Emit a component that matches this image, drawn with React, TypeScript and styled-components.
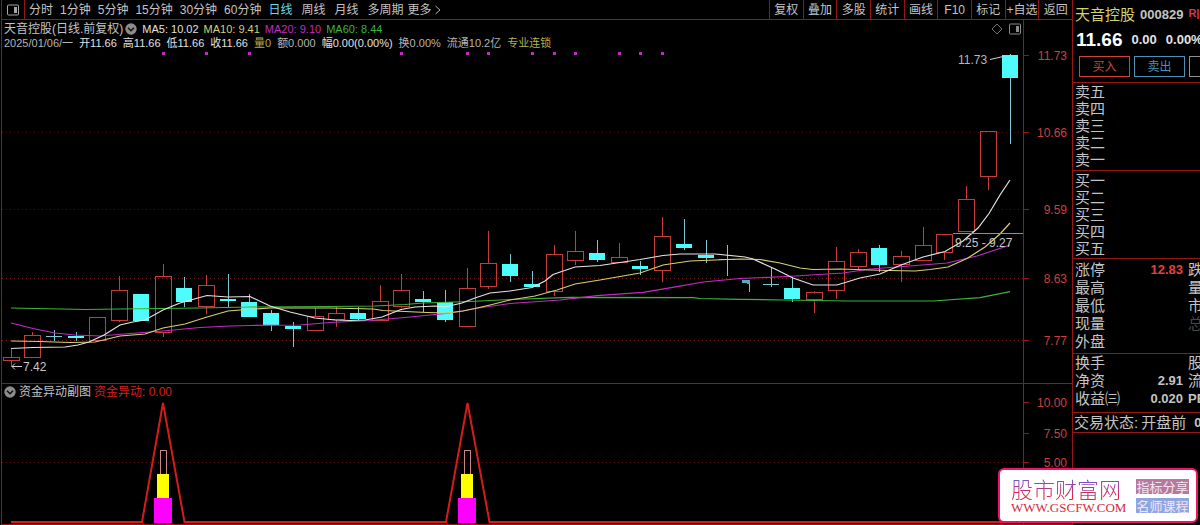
import React from "react";
import styled, { createGlobalStyle } from "styled-components";

const LINE = "#941616";
const CYAN = "#4ffcfc";
const RED = "#c43c3c";
const MAGENTA = "#c02cc0";
const YELLOW = "#d6d070";
const GREEN = "#3cb43c";
const SANS = '"Liberation Sans", "Noto Sans CJK SC", sans-serif';

const GlobalStyle = createGlobalStyle`
  *, *::before, *::after { box-sizing: border-box; }
  body { margin: 0; background: #000; color: #c4c4c4; font: 12px/14px ${SANS}; }
  button { font: inherit; color: inherit; background: none; border: 0; padding: 0; margin: 0; white-space: nowrap; cursor: pointer; }
  svg { display: block; }
`;

const Page = styled.div`
  position: relative;
  display: flex;
  min-height: 100vh;
  overflow: hidden;
`;

const Main = styled.main`
  flex: 1;
  min-width: 0;
  display: flex;
  flex-direction: column;
  padding-left: 1px;
`;

const Toolbar = styled.nav`
  display: flex;
  justify-content: space-between;
  height: 20px;
  border-left: 1px solid ${LINE};
  border-bottom: 1px solid ${LINE};
`;

const Periods = styled.div`
  display: flex;
  align-items: center;
`;

const LayoutButton = styled.button`
  display: grid;
  place-items: center;
  width: 23px;
  height: 19px;
  border-right: 1px solid ${LINE};
`;

const PeriodGroup = styled.div<{ $gap: number; $start: number }>`
  display: flex;
  align-items: center;
  gap: ${(p) => p.$gap}px;
  margin-left: ${(p) => p.$start}px;
`;

const PeriodButton = styled.button<{ $active?: boolean }>`
  display: flex;
  align-items: center;
  gap: 3px;
  color: ${(p) => (p.$active ? "#6cd8e8" : "inherit")};
`;

const Tools = styled.div`
  display: grid;
  grid-template-columns: repeat(9, 1fr);
  width: 303px;
  flex: none;
`;

const ToolButton = styled.button`
  border-left: 1px solid ${LINE};
  text-align: center;
`;

const Pane = styled.section<{ $lined?: boolean }>`
  display: flex;
  border-left: 1px solid ${LINE};
  border-top: ${(p) => (p.$lined ? `1px solid ${LINE}` : "0")};
  border-bottom: ${(p) => (p.$lined ? `1px solid ${LINE}` : "0")};
`;

const Plot = styled.div`
  flex: 1;
  min-width: 0;
`;

const Axis = styled.div`
  flex: none;
  width: 49px;
  border-left: 1px solid ${LINE};
`;

const InfoBar = styled.header`
  display: flex;
  justify-content: space-between;
  height: 30px;
  padding: 2px 2px 0 2px;
`;

const InfoRow = styled.div<{ $gap: number }>`
  display: flex;
  align-items: center;
  gap: ${(p) => p.$gap}px;
  height: 14px;
  white-space: nowrap;
`;

const Title = styled.h1`
  display: flex;
  align-items: center;
  gap: 2px;
  margin: 0;
  font-size: 12px;
  font-weight: 400;
`;

const Figure = styled.span<{ $color?: string }>`
  font-size: 11px;
  color: ${(p) => p.$color ?? "#e0e0e0"};
`;

const CornerTools = styled.div`
  display: flex;
  align-items: center;
  gap: 6px;
  height: 14px;
`;

const SubHeader = styled.header`
  display: flex;
  align-items: center;
  gap: 3px;
  height: 16px;
  padding-left: 2px;
  white-space: nowrap;
`;

const Alert = styled.span`
  color: #d02020;
`;

const Quote = styled.aside`
  flex: none;
  width: 128px;
  overflow: hidden;
  white-space: nowrap;
  border-left: 1px solid ${LINE};
`;

const QuoteHead = styled.div`
  height: 82px;
  padding: 2px 0 0 2px;
`;

const NameRow = styled.div`
  display: flex;
  align-items: center;
  gap: 5px;
  height: 25px;
`;

const StockName = styled.h2`
  margin: 0;
  font-size: 15px;
  font-weight: 400;
  color: ${YELLOW};
`;

const Code = styled.span`
  font-size: 13px;
  font-weight: 700;
`;

const Margin = styled.span`
  align-self: flex-start;
  margin-top: 4px;
  font-size: 11px;
  font-weight: 700;
  color: #d83848;
`;

const PriceRow = styled.div`
  display: flex;
  align-items: center;
  gap: 9px;
  height: 26px;
  margin-bottom: 1px;
  padding-left: 1px;
  font-size: 13px;
  font-weight: 700;
  color: #e4e4e4;
`;

const Price = styled.strong`
  font-size: 19px;
  color: #fff;
`;

const TradeRow = styled.div`
  display: flex;
  gap: 4px;
  padding: 2px 0 0 4px;
`;

const TradeButton = styled.button<{ $color: string }>`
  flex: none;
  width: 51px;
  height: 21px;
  border: 1px solid currentColor;
  color: ${(p) => p.$color};
`;

const Block = styled.div<{ $row: number; $top: number; $bottom: number }>`
  border-top: 1px solid ${LINE};
  padding: ${(p) => p.$top}px 0 ${(p) => p.$bottom}px 2px;
  font-size: 15px;
  line-height: ${(p) => p.$row}px;
`;

const Level = styled.div``;

const Fact = styled.div`
  display: grid;
  grid-template-columns: auto 1fr 17px;
  align-items: center;
`;

const Value = styled.span<{ $up?: boolean }>`
  font-size: 13px;
  font-weight: 700;
  text-align: right;
  color: ${(p) => (p.$up ? "#e04040" : "inherit")};
`;

const Next = styled.span<{ $dim?: boolean; $latin?: boolean }>`
  padding-left: 5px;
  color: ${(p) => (p.$dim ? "#484848" : "inherit")};
  font-size: ${(p) => (p.$latin ? 13 : 15)}px;
  font-weight: ${(p) => (p.$latin ? 700 : 400)};
`;

const Status = styled.div`
  display: flex;
  align-items: center;
  gap: 3px;
  height: 21px;
  padding-left: 1px;
  border-top: 1px solid ${LINE};
  border-bottom: 1px solid ${LINE};
  font-size: 15px;
`;

const Badge = styled.a`
  position: absolute;
  right: 2px;
  bottom: 2px;
  display: flex;
  justify-content: space-between;
  align-items: center;
  width: 200px;
  height: 55px;
  padding: 0 7px 0 11px;
  border: 2px solid #ee1466;
  border-radius: 6px;
  background: #fff;
  text-decoration: none;
  white-space: nowrap;
`;

const Brand = styled.span`
  display: block;
  font: 300 22px/24px "Noto Sans CJK SC", sans-serif;
  background: linear-gradient(#7c50cc 20%, #d82850 80%);
  background-clip: text;
  -webkit-background-clip: text;
  color: transparent;
`;

const Site = styled.span`
  display: block;
  font: 13px/15px "Liberation Serif", serif;
  color: #d42c40;
`;

const Tags = styled.span`
  display: grid;
  gap: 4px;
`;

const Tag = styled.span<{ $bg: string }>`
  width: 53px;
  font: 13px/15px "Noto Sans CJK SC", sans-serif;
  text-align: center;
  color: #f4e4f4;
  background: ${(p) => p.$bg};
`;

const PanelIcon = ({ color = "#a8a8a8" }: { color?: string }) => (
  <svg width="12" height="12" viewBox="0 0 12 12" aria-hidden="true">
    <rect x="0.5" y="1" width="11" height="10" rx="1" fill="none" stroke={color} />
    <rect x="7" y="3" width="3" height="6" fill={color} />
  </svg>
);

const DropIcon = () => (
  <svg width="12" height="12" viewBox="0 0 12 12" aria-hidden="true">
    <circle cx="6" cy="6" r="5.7" fill="#8c8c8c" />
    <path d="M3 4.7 6 7.7 9 4.7" fill="none" stroke="#101010" strokeWidth="1.5" />
  </svg>
);

// [open/close top, open/close bottom, high, low, rising]
type Candle = [number, number, number, number, boolean];

const candles: (Candle | null)[] = [
  [358, 360, 348, 367, true],
  [336, 357, 332, 357, true],
  [336, 337, 330, 341, false],
  [336, 338, 332, 341, false],
  [318, 340, 317, 342, true],
  [291, 320, 276, 322, true],
  [294, 321, 294, 321, false],
  [277, 332, 264, 337, true],
  [288, 302, 277, 307, false],
  [286, 306, 275, 314, true],
  [299, 301, 274, 307, false],
  [302, 317, 294, 317, false],
  [313, 325, 310, 331, false],
  [326, 329, 322, 347, false],
  [317, 330, 308, 331, true],
  [314, 319, 307, 327, true],
  [313, 319, 307, 320, false],
  [302, 320, 285, 320, true],
  [291, 306, 274, 308, true],
  [299, 302, 291, 312, false],
  [302, 320, 290, 322, false],
  [289, 326, 268, 326, true],
  [264, 286, 231, 289, true],
  [264, 276, 254, 282, false],
  [284, 287, 271, 287, false],
  [255, 291, 245, 296, true],
  [252, 260, 231, 265, true],
  [253, 260, 240, 262, false],
  [258, 262, 243, 262, true],
  [266, 269, 261, 275, false],
  [237, 270, 217, 282, true],
  [244, 248, 219, 250, false],
  [255, 258, 240, 263, false],
  [259, 260, 245, 276, false],
  null,
  [284, 285, 267, 287, false],
  [288, 299, 277, 302, false],
  [293, 299, 291, 313, true],
  [262, 290, 247, 299, true],
  [253, 266, 249, 269, true],
  [248, 265, 245, 272, false],
  [257, 264, 251, 282, true],
  [246, 260, 227, 260, true],
  [235, 252, 235, 260, true],
  [200, 231, 186, 231, true],
  [132, 176, 132, 190, true],
  [55, 78, 54, 144, false],
];

const signalBars = [7, 9, 11, 18, 21, 22, 24, 25, 26, 28, 29, 30];
const barX = (i: number) => Math.round(10.5 + 21.72 * i);

const averages: { color: string; points: string }[] = [
  {
    color: GREEN,
    points:
      "11,308 85,309.5 120,309 200,308 250,307 330,306.5 375,306 405,304.5 423,303 470,301.5 510,299.5 570,297.3 693,297.7 700,298.5 740,299.3 783,300 847,301 933,301 980,297.7 1010,291.7",
  },
  {
    color: MAGENTA,
    points:
      "11,323 33,328.5 55,333 75,335 100,336 130,333.5 163,331 200,327.5 230,326 250,325.5 300,325 330,322.5 370,320.5 405,317.5 445,313.5 460,311.5 475,308.5 510,303.5 560,300 597,295.7 643,292.3 677,286.7 703,282 740,278.5 787,276.5 843,273 870,269 897,267 947,263 977,256 1010,245",
  },
  {
    color: YELLOW,
    points:
      "11,341 40,341.5 70,342.5 95,342 120,336 145,334 163,328 185,324 207,317 228,311 240,310 270,308 330,308 373,309 383,310.5 427,312.5 447,313 463,311 475,308.5 490,305 510,300 535,296 557,290 575,284 600,280 620,276.5 640,273 663,265 690,261 740,259 760,259.5 780,263 800,268 813,269.5 840,269 870,270 890,270.5 915,271 930,269.5 948,267 967,258.5 985,247 1000,234 1010,223",
  },
  {
    color: "#e4e4e4",
    points:
      "11,348.5 33,347.5 65,347 78,345 89,342 104,335 120,325 133,322 145,320 163,310 180,303 207,295.5 228,297 250,296.5 270,306 290,312 315,318 335,320 350,320.5 365,320 382,317 401,309.5 415,307 435,306 445,307 462,303 475,298 490,293 510,291 532,287.5 545,281 553,274.5 575,267 600,265.5 640,259.5 663,255.5 680,254 715,254 745,257 753,259 775,269 793,278 813,285 837,285 860,278 880,274 901,265 923,257 945,251.5 963,241 978,228 989,213.5 1000,195 1010,180",
  },
];

const CandleShape = ({ i, c }: { i: number; c: Candle }) => {
  const [top, bottom, high, low, rising] = c;
  const x = barX(i);
  const color = rising ? RED : CYAN;
  const wick = rising ? RED : "#78c8d4";
  return (
    <g>
      {high < top && <path d={`M${x + 0.5} ${high}V${top}`} stroke={wick} />}
      {low > bottom && <path d={`M${x + 0.5} ${bottom}V${low}`} stroke={wick} />}
      {rising ? (
        <rect x={x - 7.5} y={top - 0.5} width="16" height={bottom - top + 1} fill="none" stroke={color} />
      ) : (
        <rect x={x - 8} y={top} width="16" height={bottom - top} fill={bottom - top < 2 ? wick : color} />
      )}
    </g>
  );
};

const PriceChart = () => (
  <svg width="100%" height="333" viewBox="2 50 1021 333" preserveAspectRatio="xMaxYMin meet" fontFamily={SANS} fontSize="12" role="img" aria-label="日线">
    {[132, 209, 278, 340].map((y) => (
      <path key={y} d={`M2 ${y + 0.5}H1023`} stroke={y < 250 ? "#4c1010" : "#782020"} strokeDasharray="1 3" />
    ))}
    {signalBars.map((i) => (
      <rect key={i} x={barX(i) - 1} y="52" width="3" height="3" fill={MAGENTA} />
    ))}
    {candles.map((c, i) => c && <CandleShape key={i} i={i} c={c} />)}
    <path d="M742 280h8v4h-3v-1h-5z" fill="#50b0b8" />
    <path d="M749.500 284V292" stroke="#78c8d4" />
    {averages.map((a) => (
      <polyline key={a.color} points={a.points} fill="none" stroke={a.color} strokeWidth="1.2" />
    ))}
    <path d="M953 233.500H1023" stroke="#909090" />
    <path d="M990 59.500 1003 56.500" stroke="#d0d0d0" />
    <path d="M22 366.500H12M15 363.500 12 366.500 15 369.500" fill="none" stroke="#d0d0d0" />
    <text x="958" y="64" fill="#b8b8b8">11.73</text>
    <text x="955" y="247" fill="#c8c8c8">9.25 - 9.27</text>
    <text x="23" y="371" fill="#c8c8c8">7.42</text>
  </svg>
);

const AxisChart = ({ top, height, marks }: { top: number; height: number; marks: [number, string][] }) => (
  <svg width="48" height={height} viewBox={`1024 ${top} 48 ${height}`} fontFamily={SANS} fontSize="12">
    {marks.map(([y, label]) => (
      <g key={label}>
        <path d={`M1024 ${y + 0.5}h5`} stroke={LINE} />
        <text x="1067" y={y + 5} textAnchor="end" fill="#c84040">
          {label}
        </text>
      </g>
    ))}
  </svg>
);

const SignalChart = () => (
  <svg width="100%" height="124" viewBox="2 400 1021 124" preserveAspectRatio="xMaxYMin meet" role="img" aria-label="资金异动副图">
    <path d="M2 462.500H1023" stroke="#601818" strokeDasharray="1 3" />
    <path
      d="M11 522H142L163 403 184.500 522H446L467.500 403 489.500 522H1010"
      fill="none"
      stroke="#d41c1c"
      strokeWidth="2"
    />
    {[163, 467].map((x) => (
      <g key={x}>
        <rect x={x - 2.5} y="450.500" width="6" height="24" fill="#000" stroke="#c88484" />
        <rect x={x - 6} y="474" width="12" height="24" fill="#ff0" />
        <rect x={x - 9} y="498" width="18" height="25" fill="#f0f" />
      </g>
    ))}
  </svg>
);

const minutes = ["分时", "1分钟", "5分钟", "15分钟", "30分钟", "60分钟"];
const days = ["日线", "周线", "月线", "多周期"];
const tools = ["复权", "叠加", "多股", "统计", "画线", "F10", "标记", "+自选", "返回"];

const facts: { label: string; value?: string; up?: boolean; next?: string; dim?: boolean }[] = [
  { label: "涨停", value: "12.83", up: true, next: "跌" },
  { label: "最高", next: "量" },
  { label: "最低", next: "市" },
  { label: "现量", next: "总", dim: true },
  { label: "外盘" },
];

export default function App() {
  return (
    <Page>
      <GlobalStyle />
      <Main>
        <Toolbar>
          <Periods>
            <LayoutButton aria-label="布局">
              <PanelIcon />
            </LayoutButton>
            <PeriodGroup $gap={7} $start={4}>
              {minutes.map((m) => (
                <PeriodButton key={m}>{m}</PeriodButton>
              ))}
            </PeriodGroup>
            <PeriodGroup $gap={9} $start={7}>
              {days.map((d) => (
                <PeriodButton key={d} $active={d === "日线"}>
                  {d}
                </PeriodButton>
              ))}
            </PeriodGroup>
            <PeriodGroup $gap={7} $start={4}>
              <PeriodButton>
                更多
                <svg width="6" height="10" viewBox="0 0 6 10" aria-hidden="true">
                  <path d="M0.500 1 5 5 0.500 9" fill="none" stroke="#b0b0b0" />
                </svg>
              </PeriodButton>
            </PeriodGroup>
          </Periods>
          <Tools>
            {tools.map((t) => (
              <ToolButton key={t}>{t}</ToolButton>
            ))}
          </Tools>
        </Toolbar>

        <Pane>
          <Plot>
            <InfoBar>
              <div>
                <InfoRow $gap={5}>
                  <Title>
                    天音控股(日线.前复权)
                    <DropIcon />
                  </Title>
                  <Figure>MA5: 10.02</Figure>
                  <Figure $color={YELLOW}>MA10: 9.41</Figure>
                  <Figure $color={MAGENTA}>MA20: 9.10</Figure>
                  <Figure $color={GREEN}>MA60: 8.44</Figure>
                </InfoRow>
                <InfoRow $gap={6}>
                  <Figure $color="#b4b4b4">2025/01/06/一</Figure>
                  <Figure>开11.66</Figure>
                  <Figure>高11.66</Figure>
                  <Figure>低11.66</Figure>
                  <Figure>收11.66</Figure>
                  <Figure $color="#b4a850">量0</Figure>
                  <Figure $color="#b4b4b4">额0.000</Figure>
                  <Figure>幅0.00(0.00%)</Figure>
                  <Figure $color="#b4b4b4">换0.00%</Figure>
                  <Figure $color="#b4b4b4">流通10.2亿</Figure>
                  <Figure $color="#b4b050">专业连锁</Figure>
                </InfoRow>
              </div>
              <CornerTools>
                <svg width="12" height="12" viewBox="0 0 12 12" aria-hidden="true">
                  <path d="M6 1 11 6 6 11 1 6z" fill="none" stroke="#707070" />
                </svg>
                <PanelIcon color="#8c8c8c" />
              </CornerTools>
            </InfoBar>
            <PriceChart />
          </Plot>
          <Axis>
            <AxisChart
              top={20}
              height={363}
              marks={[
                [55, "11.73"],
                [132, "10.66"],
                [209, "9.59"],
                [278, "8.63"],
                [340, "7.77"],
              ]}
            />
          </Axis>
        </Pane>

        <Pane $lined>
          <Plot>
            <SubHeader>
              <DropIcon />
              <span>资金异动副图</span>
              <Alert>资金异动: 0.00</Alert>
            </SubHeader>
            <SignalChart />
          </Plot>
          <Axis>
            <AxisChart
              top={384}
              height={140}
              marks={[
                [402, "10.00"],
                [433, "7.50"],
                [462, "5.00"],
              ]}
            />
          </Axis>
        </Pane>
      </Main>

      <Quote>
        <QuoteHead>
          <NameRow>
            <StockName>天音控股</StockName>
            <Code>000829</Code>
            <Margin>R|</Margin>
          </NameRow>
          <PriceRow>
            <Price>11.66</Price>
            <span>0.00</span>
            <span>0.00%</span>
          </PriceRow>
          <TradeRow>
            <TradeButton $color="#d04438">买入</TradeButton>
            <TradeButton $color="#4c90b4">卖出</TradeButton>
            <TradeButton $color="#909090" aria-label="更多交易" />
          </TradeRow>
        </QuoteHead>
        <Block $row={17} $top={0} $bottom={2}>
          {["卖五", "卖四", "卖三", "卖二", "卖一"].map((l) => (
            <Level key={l}>{l}</Level>
          ))}
        </Block>
        <Block $row={17} $top={1} $bottom={1}>
          {["买一", "买二", "买三", "买四", "买五"].map((l) => (
            <Level key={l}>{l}</Level>
          ))}
        </Block>
        <Block $row={18} $top={2} $bottom={2}>
          {facts.map((f) => (
            <Fact key={f.label}>
              <span>{f.label}</span>
              <Value $up={f.up}>{f.value}</Value>
              <Next $dim={f.dim}>{f.next}</Next>
            </Fact>
          ))}
        </Block>
        <Block $row={18} $top={0} $bottom={4}>
          <Fact>
            <span>换手</span>
            <Value />
            <Next>股</Next>
          </Fact>
          <Fact>
            <span>净资</span>
            <Value>2.91</Value>
            <Next>流</Next>
          </Fact>
          <Fact>
            <span>收益㈢</span>
            <Value>0.020</Value>
            <Next $latin>PE</Next>
          </Fact>
        </Block>
        <Status>
          <span>交易状态:</span>
          <span>开盘前</span>
          <Next $latin>0</Next>
        </Status>
      </Quote>

      <Badge href="#home">
        <span>
          <Brand>股市财富网</Brand>
          <Site>WWW.GSCFW.COM</Site>
        </span>
        <Tags>
          <Tag $bg="#b8789c">指标分享</Tag>
          <Tag $bg="#8ea6e0">名师课程</Tag>
        </Tags>
      </Badge>
    </Page>
  );
}
